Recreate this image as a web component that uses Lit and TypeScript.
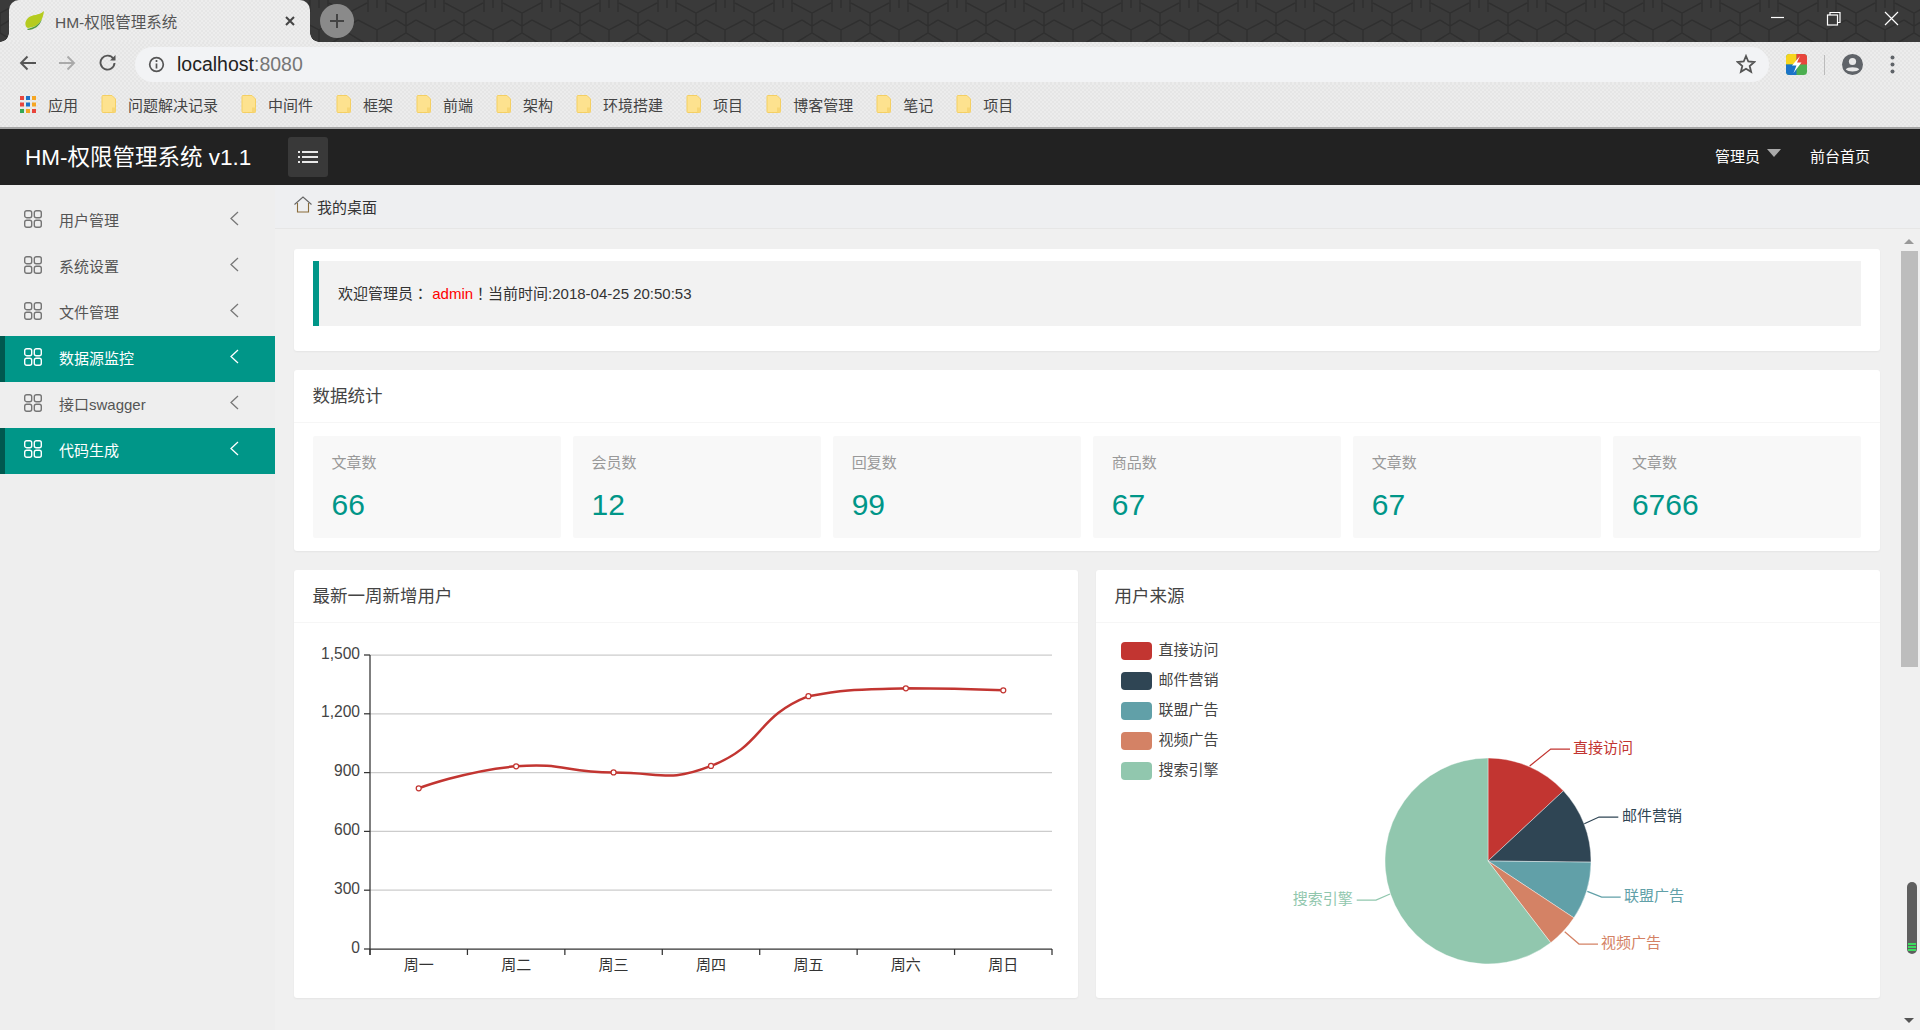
import { LitElement, html, css, svg } from "lit";
import { customElement } from "lit/decorators.js";

const bookmarks = ["问题解决记录", "中间件", "框架", "前端", "架构", "环境搭建", "项目", "博客管理", "笔记", "项目"];
const menu = [
  { t: "用户管理", a: false },
  { t: "系统设置", a: false },
  { t: "文件管理", a: false },
  { t: "数据源监控", a: true },
  { t: "接口swagger", a: false },
  { t: "代码生成", a: true },
];
const stats = [
  ["文章数", "66"],
  ["会员数", "12"],
  ["回复数", "99"],
  ["商品数", "67"],
  ["文章数", "67"],
  ["文章数", "6766"],
];

const colors = ["#c23531", "#2f4554", "#61a0a8", "#d48265", "#91c7ae"];
const pieNames = ["直接访问", "邮件营销", "联盟广告", "视频广告", "搜索引擎"];
const pieValues = [335, 310, 234, 135, 1548];
const pieLabels = [
  { line: "1529.7,766 1550.7,749 1570,749", x: 1573, y: 747, anchor: "start" },
  { line: "1584.3,823.7 1599,817 1618.3,817", x: 1622, y: 815, anchor: "start" },
  { line: "1587.3,891.3 1601.7,897 1620.7,897", x: 1624, y: 895, anchor: "start" },
  { line: "1564.7,931.7 1579,944 1598,944", x: 1601, y: 942, anchor: "start" },
  { line: "1390,894 1376,900 1356.7,900", x: 1352.7, y: 898, anchor: "end" },
];

const weekDays = ["周一", "周二", "周三", "周四", "周五", "周六", "周日"];
const lineValues = [820, 932, 901, 934, 1290, 1330, 1320];
const AX0 = 370, AX1 = 1052, AY0 = 949, AY1 = 655;
const stepX = (AX1 - AX0) / 7;
const pts = lineValues.map((v, i) => [AX0 + stepX * (i + 0.5), AY0 - ((AY0 - AY1) * v) / 1500]);

function smoothPath(p: number[][]): string {
  const dist = (a: number[], b: number[]) => Math.hypot(a[0] - b[0], a[1] - b[1]);
  const ys = p.map((q) => q[1]);
  const minY = Math.min(...ys), maxY = Math.max(...ys);
  const clampY = (y: number) => Math.min(maxY, Math.max(minY, y));
  let d = `M${p[0][0]} ${p[0][1]}`;
  let out = p[0];
  for (let i = 1; i < p.length; i++) {
    const c = p[i];
    if (i === p.length - 1) {
      d += ` C${out[0]} ${out[1]} ${c[0]} ${c[1]} ${c[0]} ${c[1]}`;
      break;
    }
    const a = p[i - 1], b = p[i + 1];
    const vx = (b[0] - a[0]) * 0.5, vy = (b[1] - a[1]) * 0.5;
    const lp = dist(c, a), ln = dist(c, b);
    const r = ln / (ln + lp);
    const inx = c[0] - vx * (1 - r), iny = clampY(c[1] - vy * (1 - r));
    d += ` C${out[0]} ${out[1]} ${inx} ${iny} ${c[0]} ${c[1]}`;
    out = [c[0] + vx * r, clampY(c[1] + vy * r)];
  }
  return d;
}

function pieSlices() {
  const total = pieValues.reduce((s, v) => s + v, 0);
  const cx = 1488, cy = 861, r = 103;
  let ang = -Math.PI / 2;
  return pieValues.map((v, i) => {
    const next = ang + (v / total) * Math.PI * 2;
    const large = next - ang > Math.PI ? 1 : 0;
    const d = `M${cx} ${cy} L${cx + r * Math.cos(ang)} ${cy + r * Math.sin(ang)} A${r} ${r} 0 ${large} 1 ${cx + r * Math.cos(next)} ${cy + r * Math.sin(next)} Z`;
    ang = next;
    return svg`<path d=${d} fill=${colors[i]} stroke="#fff" stroke-width="0.4"></path>`;
  });
}

const gridIcon = html`<svg class="mi" width="18" height="18" viewBox="0 0 18 18" fill="none" stroke="currentColor" stroke-width="1.4">
  <rect x="0.7" y="0.7" width="7" height="7" rx="2"></rect><rect x="10.3" y="0.7" width="7" height="7" rx="2"></rect>
  <rect x="0.7" y="10.3" width="7" height="7" rx="2"></rect><rect x="10.3" y="10.3" width="7" height="7" rx="2"></rect></svg>`;
const chevron = html`<svg class="chev" width="9" height="15" viewBox="0 0 9 15" fill="none" stroke="currentColor" stroke-width="1.3"><path d="M8 1 L1 7.5 L8 14"></path></svg>`;
const folder = html`<svg class="folder" width="15" height="18" viewBox="0 0 15 18"><path d="M1 1.5 Q1 .5 2 .5 H11 L14.5 4 V16.5 Q14.5 17.5 13.5 17.5 H2 Q1 17.5 1 16.5 Z" fill="#fde28f" stroke="#f4cf63"></path><rect x="11" y="12.5" width="3.5" height="5" fill="#f7d674"></rect></svg>`;

@customElement("app-root")
export class AppRoot extends LitElement {
  static styles = css`
    :host { display: block; width: 1920px; height: 1030px; overflow: hidden; position: relative;
      font-family: "Liberation Sans", "Noto Sans CJK SC", sans-serif; color: #333; background: #f0f0f0; }
    * { box-sizing: border-box; }

    .tabs { height: 42px; position: relative; background: #3a3a3a; display: flex; align-items: flex-start; overflow: hidden; }
    .pattern { position: absolute; inset: 0; width: 100%; height: 100%; }
    .tab { position: relative; margin-left: 9px; width: 301px; height: 42px; border-radius: 10px 10px 0 0;
      display: flex; align-items: center; padding: 0 0 0 16px; color: #555; font-size: 15.5px;
      background: repeating-conic-gradient(#e6e6e6 0 25%, #ededed 0 50%) 0 0 / 4px 4px; }
    .tab::before, .tab::after { content: ""; position: absolute; bottom: 0; width: 9px; height: 9px; }
    .tab::before { left: -9px; background: radial-gradient(circle at 0 0, transparent 8.5px, #e9e9e9 9px); }
    .tab::after { right: -9px; background: radial-gradient(circle at 100% 0, transparent 8.5px, #e9e9e9 9px); }
    .tab .title { margin-left: 10px; flex: 1; }
    .tab .close { margin-right: 14px; display: block; }
    .plus { position: relative; margin: 4px 0 0 10px; width: 34px; height: 34px; border-radius: 50%;
      background: #8a8a8a; display: flex; align-items: center; justify-content: center; }
    .winbtns { position: absolute; top: 0; right: 0; }

    .checker { background: repeating-conic-gradient(#e5e5e5 0 25%, #ececec 0 50%) 0 0 / 4px 4px; }
    .toolbar { height: 41px; display: flex; align-items: center; position: relative; padding-left: 19px; }
    .navbtn { display: block; margin-right: 23px; }
    .address { position: absolute; left: 135px; top: 5px; width: 1634px; height: 35px; border-radius: 18px; background: #f2f3f5;
      display: flex; align-items: center; padding-left: 13px; font-size: 19.5px; color: #222; }
    .address .i { margin-right: 12px; display: block; }
    .address .port { color: #777; }
    .address .star { position: absolute; right: 13px; top: 7px; }
    .tools { position: absolute; left: 1786px; top: 12px; display: flex; align-items: center; }
    .sep { width: 1px; height: 20px; background: #bbb; margin: 0 17px; }
    .dots { margin-left: 27px; display: block; }
    .avatar { display: block; }

    .bookmarks { height: 44px; display: flex; align-items: center; padding: 0 0 2px 20px; font-size: 15px; color: #444; }
    .bm { display: flex; align-items: center; gap: 12px; margin-right: 23px; white-space: nowrap; }
    .folder { display: block; }
    .rule { height: 2px; background: #a5a5a5; }

    .nav { height: 56px; background: #222; color: #fff; display: flex; align-items: center; padding: 0 50px 0 25px; font-size: 15px; }
    .brand { width: 263px; font-size: 22.5px; margin-top: -5px; }
    .toggle { width: 40px; height: 40px; border-radius: 3px; background: #393939; display: flex; align-items: center; justify-content: center; }
    .right { margin-left: auto; display: flex; align-items: center; margin-top: -4px; }
    .caret { width: 0; height: 0; border-left: 7.5px solid transparent; border-right: 7.5px solid transparent; border-top: 8px solid #aaa; margin: 0 29px 4px 7px; }

    .body { display: flex; height: 845px; }
    .side { width: 275px; flex: none; background: #eee; padding-top: 13px; }
    .item { height: 46px; display: flex; align-items: center; padding-left: 24px; font-size: 15px; color: #555; position: relative; }
    .item .mi { color: #757575; display: block; margin-top: -4px; }
    .item .label { margin: -4px 0 0 17px; flex: 1; }
    .item .chev { color: #777; margin: -5px 36px 0 0; display: block; }
    .item.on { background: #009688; color: #fff; border-left: 5px solid #00594f; padding-left: 19px; }
    .item.on .mi, .item.on .chev { color: #fff; }

    .main { flex: 1; display: flex; flex-direction: column; min-width: 0; }
    .crumb { height: 44px; flex: none; background: #eeeff1; border-bottom: 1px solid #e6e6e6; display: flex; align-items: center; padding-left: 19px; font-size: 15px; color: #333; }
    .crumb svg { display: block; margin: -4px 5px 0 0; }
    .scroll { flex: 1; position: relative; padding: 20px 40px 0 19px; display: flex; flex-direction: column; gap: 19px; background: #f0f0f0; overflow: hidden; }

    .card { background: #fff; border-radius: 3px; box-shadow: 0 1px 2px rgba(0,0,0,.05); }
    .welcome { padding: 12px 19px 25px; }
    .quote { height: 65px; border-left: 6px solid #009688; background: #f2f2f2; display: flex; align-items: center; padding: 0 0 2px 19px; font-size: 15px; color: #333; }
    .quote .line { white-space: pre; }
    .quote em { font-style: normal; color: #f00; }
    .quote .p { font-family: "Noto Sans CJK TC", sans-serif; }
    .head { height: 53px; border-bottom: 1px solid #f6f6f6; display: flex; align-items: center; padding: 0 0 4px 18.5px; font-size: 17.5px; color: #444; }
    .statwrap { padding: 13px 19px; display: grid; grid-template-columns: repeat(6, 1fr); gap: 12.5px; }
    .stat { height: 102px; background: #f8f8f8; border-radius: 2px; padding: 17px 0 0 18.5px; }
    .stat .k { font-size: 15px; line-height: 20px; color: #999; }
    .stat .v { font-size: 30px; line-height: 36px; color: #009688; margin-top: 14px; }
    .row { display: grid; grid-template-columns: 784px 784px; gap: 18px; }
    .chart { display: block; width: 784px; height: 375px; }
    .chart text { font-family: "Liberation Sans", "Noto Sans CJK SC", sans-serif; font-size: 15px; fill: #333; }
    .chart text.num { font-size: 15.6px; fill: #444; }
    .chart text.c { dominant-baseline: central; }
    .chart text.legend { fill: #444; }

    .sbthumb { position: absolute; left: 1626px; top: 22px; width: 17px; height: 416px; background: #bdbdbd; }
    .sbup { position: absolute; left: 1629px; top: 10px; width: 0; height: 0; border-left: 5px solid transparent; border-right: 5px solid transparent; border-bottom: 5px solid #999; }
    .sbdown { position: absolute; left: 1629px; top: 789px; width: 0; height: 0; border-left: 5px solid transparent; border-right: 5px solid transparent; border-top: 5px solid #555; }
    .mini { position: absolute; left: 1632px; top: 653px; width: 10px; height: 72px; border-radius: 5px; background: #5f5f5f; overflow: hidden; display: flex; flex-direction: column; justify-content: flex-end; gap: 1px; padding: 0 1px 3px; }
    .mini i { display: block; height: 2px; background: #3ddc5f; }
  `;

  private chrome() {
    return html`
      <div class="tabs">
        <svg class="pattern" xmlns="http://www.w3.org/2000/svg">
          <defs><pattern id="hex" width="58" height="50" patternUnits="userSpaceOnUse">
            <path d="M10 20 L29 30 L48 20 M29 30 V50 M29 0 V8 M20 0 V12 M38 0 V12 M39 3 L58 13 M0 13 L19 3 M0 13 V33 M58 13 V33 M0 33 L10 39 L29 50 M58 33 L48 39 L29 50 M10 20 L0 26 M48 20 L58 26" fill="none" stroke="#2f2f2f" stroke-width="1.5"></path>
          </pattern></defs>
          <rect width="100%" height="100%" fill="url(#hex)"></rect>
        </svg>
        <div class="tab">
          <svg width="20" height="20" viewBox="0 0 20 20"><path d="M19 0 C18 9 14 16 3 17 C0 16 -1 11 3 7 C7 3 14 5 19 0 Z" fill="#b5cb1f"></path><path d="M2 18 C8 17 14 14 17 8 C15 15 9 19 3 19 Z" fill="#4f9a3c"></path></svg>
          <span class="title">HM-权限管理系统</span>
          <svg class="close" width="12" height="12" viewBox="0 0 12 12"><path d="M2 2 L10 10 M10 2 L2 10" stroke="#444" stroke-width="2"></path></svg>
        </div>
        <div class="plus"><svg width="18" height="18" viewBox="0 0 18 18"><path d="M9 2 V16 M2 9 H16" stroke="#444" stroke-width="2"></path></svg></div>
        <svg class="winbtns" width="160" height="42" viewBox="1760 0 160 42" fill="none" stroke="#fff" stroke-width="1.2">
          <path d="M1771 17.5 H1784"></path>
          <rect x="1827.5" y="15" width="10" height="10"></rect><path d="M1830 15 V12.5 H1840 V22.5 H1837.5"></path>
          <path d="M1885 12 L1898 25 M1898 12 L1885 25"></path>
        </svg>
      </div>
      <div class="toolbar checker">
        <svg class="navbtn" width="17" height="16" viewBox="0 0 17 16" fill="none" stroke="#555" stroke-width="1.9"><path d="M17 8 H2 M8.5 1.5 L2 8 L8.5 14.5"></path></svg>
        <svg class="navbtn" width="17" height="16" viewBox="0 0 17 16" fill="none" stroke="#aaa" stroke-width="1.9"><path d="M0 8 H15 M8.5 1.5 L15 8 L8.5 14.5"></path></svg>
        <svg class="navbtn" width="17" height="17" viewBox="0 0 17 17" fill="none" stroke="#555" stroke-width="1.9"><path d="M14.5 5 A7 7 0 1 0 15.5 9"></path><path d="M16.5 1 V6.5 H11 Z" fill="#555" stroke="none"></path></svg>
        <div class="address">
          <svg class="i" width="17" height="17" viewBox="0 0 17 17" fill="none" stroke="#555" stroke-width="1.7"><circle cx="8.5" cy="8.5" r="6.8"></circle><path d="M8.5 7.5 V12.5 M8.5 4 V6"></path></svg>
          <span>localhost<span class="port">:8080</span></span>
          <svg class="star" width="20" height="20" viewBox="0 0 20 20" fill="none" stroke="#555" stroke-width="1.8"><path d="M10 2 L12.3 7.5 L18.3 8 L13.7 12 L15.1 17.8 L10 14.7 L4.9 17.8 L6.3 12 L1.7 8 L7.7 7.5 Z"></path></svg>
        </div>
        <div class="tools">
          <svg width="21" height="21" viewBox="0 0 21 21">
            <rect width="21" height="21" rx="3.5" fill="#4caf50"></rect>
            <path d="M3.5 0 H10.5 V10.5 H0 V3.5 Q0 0 3.5 0 Z" fill="#f7d51d"></path>
            <path d="M10.5 0 H17.5 Q21 0 21 3.5 V10.5 H10.5 Z" fill="#e8453c"></path>
            <path d="M0 10.5 H10.5 V21 H3.5 Q0 21 0 17.5 Z" fill="#1a73c8"></path>
            <path d="M14 2 L6 11.5 H10.5 L7.5 19 L15.5 8.5 H11 Z" fill="#fff"></path>
          </svg>
          <div class="sep"></div>
          <svg class="avatar" width="21" height="21" viewBox="0 0 21 21"><circle cx="10.5" cy="10.5" r="10.5" fill="#5f6368"></circle><circle cx="10.5" cy="7.5" r="3.6" fill="#e8e8e8"></circle><path d="M3.8 15.5 C5 12.5 16 12.5 17.2 15.5 C15 18 6 18 3.8 15.5 Z" fill="#e8e8e8"></path></svg>
          <svg class="dots" width="5" height="19" viewBox="0 0 5 19" fill="#5f6368"><circle cx="2.5" cy="2.5" r="2"></circle><circle cx="2.5" cy="9.5" r="2"></circle><circle cx="2.5" cy="16.5" r="2"></circle></svg>
        </div>
      </div>
      <div class="bookmarks checker">
        <div class="bm">
          <svg width="16" height="17" viewBox="0 0 16 17">
            ${[0, 1, 2].map((r) => [0, 1, 2].map((c) => svg`<rect x=${c * 6} y=${r * 6.5} width="4" height="4" fill=${["#e8453c", "#1a73c8", "#f5a623", "#e8453c", "#1a73c8", "#f5a623", "#34a853", "#f5a623", "#e8453c"][r * 3 + c]}></rect>`))}
          </svg>
          <span>应用</span>
        </div>
        ${bookmarks.map((b) => html`<div class="bm">${folder}<span>${b}</span></div>`)}
      </div>
      <div class="rule"></div>
    `;
  }

  private lineChart() {
    const ticks = [0, 300, 600, 900, 1200, 1500];
    return html`<svg class="chart" viewBox="294 623 784 375">
      ${ticks.map((t) => {
        const y = AY0 - ((AY0 - AY1) * t) / 1500;
        return svg`
          ${t > 0 ? svg`<line x1=${AX0} x2=${AX1} y1=${y} y2=${y} stroke="#ccc" stroke-width="1.25"></line>` : ""}
          <line x1=${AX0 - 6} x2=${AX0} y1=${y} y2=${y} stroke="#333" stroke-width="1.25"></line>
          <text class="c num" x="360" y=${y - 2} text-anchor="end">${t.toLocaleString("en-US")}</text>`;
      })}
      <line x1=${AX0} x2=${AX0} y1=${AY1} y2=${AY0 + 6} stroke="#333" stroke-width="1.25"></line>
      <line x1=${AX0} x2=${AX1} y1=${AY0} y2=${AY0} stroke="#333" stroke-width="1.25"></line>
      ${[0, 1, 2, 3, 4, 5, 6, 7].map((i) => svg`<line x1=${AX0 + i * stepX} x2=${AX0 + i * stepX} y1=${AY0} y2=${AY0 + 6} stroke="#333" stroke-width="1.25"></line>`)}
      ${weekDays.map((d, i) => svg`<text class="c" x=${AX0 + stepX * (i + 0.5)} y="964" text-anchor="middle">${d}</text>`)}
      <path d=${smoothPath(pts)} fill="none" stroke="#c23531" stroke-width="2.5"></path>
      ${pts.map((p) => svg`<circle cx=${p[0]} cy=${p[1]} r="2.5" fill="#fff" stroke="#c23531" stroke-width="1.25"></circle>`)}
    </svg>`;
  }

  private pieChart() {
    return html`<svg class="chart" viewBox="1096 623 784 375">
      ${pieNames.map((n, i) => svg`
        <rect x="1121" y=${642 + i * 30} width="31" height="18" rx="4" fill=${colors[i]}></rect>
        <text class="c legend" x="1158.5" y=${649 + i * 30}>${n}</text>`)}
      ${pieSlices()}
      ${pieLabels.map((l, i) => svg`
        <polyline points=${l.line} fill="none" stroke=${colors[i]} stroke-width="1.25"></polyline>
        <text class="c" x=${l.x} y=${l.y} text-anchor=${l.anchor} style="fill:${colors[i]}">${pieNames[i]}</text>`)}
    </svg>`;
  }

  render() {
    return html`
      ${this.chrome()}
      <div class="nav">
        <div class="brand">HM-权限管理系统 v1.1</div>
        <div class="toggle"><svg width="20" height="12" viewBox="0 0 20 12" fill="#e8e8e8"><rect x="0" y="0" width="2" height="2"></rect><rect x="4" y="0" width="16" height="2"></rect><rect x="0" y="5" width="2" height="2"></rect><rect x="4" y="5" width="16" height="2"></rect><rect x="0" y="10" width="2" height="2"></rect><rect x="4" y="10" width="16" height="2"></rect></svg></div>
        <div class="right"><span>管理员</span><span class="caret"></span><span>前台首页</span></div>
      </div>
      <div class="body">
        <aside class="side">
          ${menu.map((m) => html`<div class="item ${m.a ? "on" : ""}">${gridIcon}<span class="label">${m.t}</span>${chevron}</div>`)}
        </aside>
        <div class="main">
          <div class="crumb">
            <svg width="18" height="17" viewBox="0 0 18 17" fill="none" stroke="#666" stroke-width="1.1"><path d="M.5 8.5 L9 1 L17.5 8.5"></path><path d="M3.5 7 V16 H14.5 V7" stroke="#8a6d3b"></path></svg>
            <span>我的桌面</span>
          </div>
          <div class="scroll">
            <div class="card welcome"><div class="quote"><span class="line">欢迎管理员<span class="p">：</span> <em>admin</em><span class="p">！</span>当前时间:2018-04-25 20:50:53</span></div></div>
            <div class="card">
              <div class="head">数据统计</div>
              <div class="statwrap">
                ${stats.map((s) => html`<div class="stat"><div class="k">${s[0]}</div><div class="v">${s[1]}</div></div>`)}
              </div>
            </div>
            <div class="row">
              <div class="card"><div class="head">最新一周新增用户</div>${this.lineChart()}</div>
              <div class="card"><div class="head">用户来源</div>${this.pieChart()}</div>
            </div>
            <div class="sbup"></div>
            <div class="sbthumb"></div>
            <div class="mini"><i></i><i></i><i></i></div>
            <div class="sbdown"></div>
          </div>
        </div>
      </div>
    `;
  }
}
